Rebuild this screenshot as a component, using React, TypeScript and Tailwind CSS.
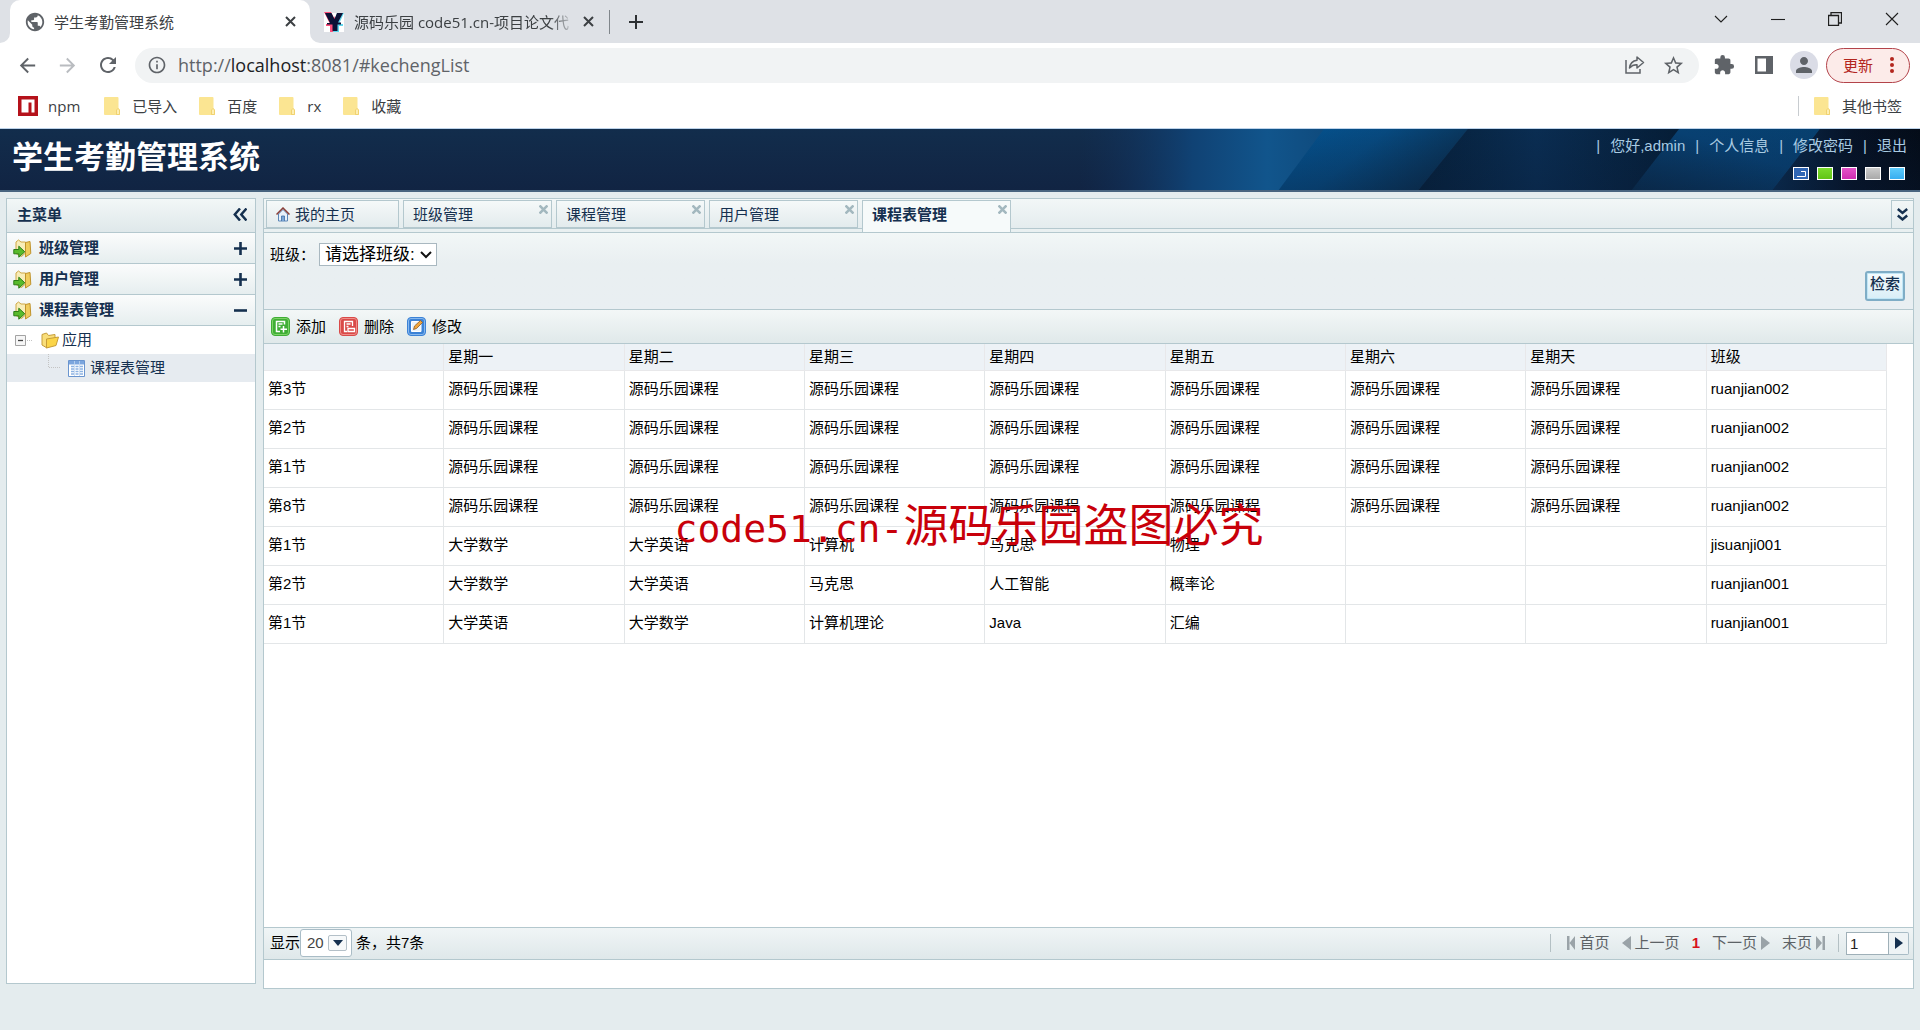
import type { ReactNode } from "react";
import {
  MdArrowBack,
  MdArrowForward,
  MdExtension,
  MdInfoOutline,
  MdPerson,
  MdPublic,
  MdRefresh,
  MdStarBorder,
} from "react-icons/md";

const weekdays = ["", "星期一", "星期二", "星期三", "星期四", "星期五", "星期六", "星期天", "班级"];

const full = Array<string>(7).fill("源码乐园课程");

const lessons: string[][] = [
  ["第3节", ...full, "ruanjian002"],
  ["第2节", ...full, "ruanjian002"],
  ["第1节", ...full, "ruanjian002"],
  ["第8节", ...full, "ruanjian002"],
  ["第1节", "大学数学", "大学英语", "计算机", "马克思", "物理", "", "", "jisuanji001"],
  ["第2节", "大学数学", "大学英语", "马克思", "人工智能", "概率论", "", "", "ruanjian001"],
  ["第1节", "大学英语", "大学数学", "计算机理论", "Java", "汇编", "", "", "ruanjian001"],
];

const pageTabs = ["班级管理", "课程管理", "用户管理", "课程表管理"];

export default function App() {
  return (
    <div className="relative flex min-h-screen flex-col bg-[#e4ecee] font-['Liberation_Sans','Noto_Sans_CJK_SC',sans-serif] text-[15px] leading-5 text-black">
      <BrowserChrome />
      <SiteHeader />
      <div className="flex flex-1 gap-[7px] px-[6px] pt-[6px] pb-[41px]">
        <Sidebar />
        <MainPanel />
      </div>
      <Watermark />
    </div>
  );
}

// 浏览器外壳：标签栏、地址栏、书签栏
function BrowserChrome() {
  return (
    <div className="bg-white font-['Open_Sans','Noto_Sans_CJK_SC',sans-serif] text-[#3c4043]">
      <div className="flex h-[43px] items-stretch bg-[#dee1e6]">
        <div className="relative ml-[10px] flex w-[300px] items-center rounded-t-[10px] bg-white pr-3 pl-[14px]">
          <TabFoot className="absolute bottom-0 -left-[10px]" />
          <TabFoot className="absolute -right-[10px] bottom-0 -scale-x-100" />
          <MdPublic className="mr-2 size-[22px] text-[#5f6368]" />
          <span className="flex-1">学生考勤管理系统</span>
          <button aria-label="关闭标签页" className="flex size-4 items-center justify-center">
            <CloseIcon />
          </button>
        </div>
        <div className="flex w-[299px] items-center pr-[13px] pl-[14px]">
          <FavIconY />
          <span className="mr-1 ml-[10px] flex-1 overflow-hidden whitespace-nowrap [mask-image:linear-gradient(to_right,black_88%,transparent)]">
            源码乐园 code51.cn-项目论文代
          </span>
          <button aria-label="关闭标签页" className="flex size-4 items-center justify-center">
            <CloseIcon />
          </button>
        </div>
        <span className="h-6 w-px self-center bg-[#80868b]" />
        <button aria-label="新标签页" className="ml-[14px] flex w-6 items-center justify-center">
          <svg width="16" height="16" viewBox="0 0 16 16" stroke="#2d3033" strokeWidth="2">
            <path d="M8 1v14M1 8h14" />
          </svg>
        </button>
        <div className="ml-auto flex items-start pt-1 text-[#1f1f1f]">
          <WindowButton label="搜索标签页">
            <path d="M1 4l6 6 6-6" />
          </WindowButton>
          <WindowButton label="最小化">
            <path d="M0 7.5h14" />
          </WindowButton>
          <WindowButton label="还原">
            <path d="M.5 3.500h10v10H.5zM3 3.500V.5h10.500v10.500H11" strokeWidth="1.300" />
          </WindowButton>
          <WindowButton label="关闭">
            <path d="M1 1l12 12M13 1L1 13" />
          </WindowButton>
        </div>
      </div>

      <div className="flex h-11 items-center pr-[10px] pl-4 text-[#5f6368]">
        <button aria-label="后退">
          <MdArrowBack className="size-[23px]" />
        </button>
        <button aria-label="前进" className="ml-[17px] text-[#b9bcc0]">
          <MdArrowForward className="size-[23px]" />
        </button>
        <button aria-label="刷新" className="ml-[17px]">
          <MdRefresh className="size-6" />
        </button>
        <div className="ml-[15px] flex h-[35px] flex-1 items-center rounded-full bg-[#f1f3f4] pr-[14px] pl-3">
          <MdInfoOutline className="size-5" />
          <span className="ml-[11px] flex-1 text-[18px]">
            http://<span className="text-[#202124]">localhost</span>:8081/#kechengList
          </span>
          <button aria-label="分享">
            <svg width="20" height="20" viewBox="0 0 20 20" fill="none" stroke="#5f6368" strokeWidth="1.500">
              <path d="M1 5v13h14v-4" />
              <path d="M12 2l6.500 5.500L12 13v-3.200c-3.500-.2-5.500 1-7.500 3.200.6-4.500 3.500-7.200 7.500-7.700z" strokeLinejoin="round" />
            </svg>
          </button>
          <button aria-label="收藏此页" className="ml-[17px]">
            <MdStarBorder className="size-[23px]" />
          </button>
        </div>
        <button aria-label="扩展程序" className="ml-[14px]">
          <MdExtension className="size-[22px]" />
        </button>
        <button aria-label="侧边栏" className="ml-5">
          <svg width="18" height="18" viewBox="0 0 18 18" fill="#5f6368">
            <path d="M0 0h18v18H0zM2.500 2.500v13H11v-13z" fillRule="evenodd" />
          </svg>
        </button>
        <button aria-label="用户" className="ml-[17px] flex size-7 items-center justify-center rounded-full bg-[#dadce6]">
          <MdPerson className="size-6" />
        </button>
        <button className="ml-2 flex h-[35px] w-[84px] items-center justify-between rounded-full border border-[#b3434a] bg-[#fcebe9] pr-[15px] pl-4 text-[#b3261e]">
          更新
          <svg width="4" height="18" viewBox="0 0 4 18" fill="#b3261e">
            <circle cx="2" cy="3" r="2" />
            <circle cx="2" cy="9" r="2" />
            <circle cx="2" cy="15" r="2" />
          </svg>
        </button>
      </div>

      <div className="flex h-[42px] items-center border-b border-[#bdd3ea] px-[18px] pb-1">
        <a href="#npm" className="mr-6 flex items-center gap-[10px]">
          <svg width="20" height="20" viewBox="0 0 20 20">
            <path d="M0 0h20v20H0z" fill="#b5121b" />
            <path d="M3.500 3.500h13v13h-3V6.500h-3v10h-7z" fill="#fff" />
          </svg>
          npm
        </a>
        {["已导入", "百度", "rx", "收藏"].map((name) => (
          <a key={name} href={`#${name}`} className="mr-[22px] flex items-center gap-3">
            <BookmarkFolder />
            {name}
          </a>
        ))}
        <a href="#other" className="ml-auto flex items-center gap-3">
          <span className="mr-[3px] h-5 w-px bg-[#c8ccd0]" />
          <BookmarkFolder />
          其他书签
        </a>
      </div>
    </div>
  );
}

function TabFoot({ className }: { className: string }) {
  return (
    <svg className={className} width="10" height="10" viewBox="0 0 10 10">
      <path d="M10 0v10H0A10 10 0 0 0 10 0z" fill="#fff" />
    </svg>
  );
}

function CloseIcon() {
  return (
    <svg width="11" height="11" viewBox="0 0 11 11" stroke="#3c4043" strokeWidth="2">
      <path d="M1 1l9 9M10 1l-9 9" />
    </svg>
  );
}

function FavIconY() {
  return (
    <svg width="20" height="20" viewBox="0 0 20 20">
      <path d="M0 1h20v19H0z" fill="#fff" />
      <path d="M0 0h7l3 6 1-2v16H6v-6H2v-2h4z" fill="#ff4f7b" />
      <path d="M13 1h7l-5 11h4v2h-4v6H9z" fill="#5fd8ee" />
      <path d="M1 1h6.500l3 6 2.500-6h6l-5 9.500h3v2h-3.500V19h-5v-6.500H3v-1.500h3z" fill="#0c1236" />
    </svg>
  );
}

function WindowButton({ label, children }: { label: string; children: ReactNode }) {
  return (
    <button aria-label={label} className="flex h-[30px] w-[57px] items-center justify-center">
      <svg width="14" height="14" viewBox="0 0 14 14" fill="none" stroke="currentColor" strokeWidth="1.100">
        {children}
      </svg>
    </button>
  );
}

function BookmarkFolder() {
  return (
    <svg width="16" height="18" viewBox="0 0 16 18">
      <path d="M1 0h12.500a1 1 0 0 1 1 1v10l1.500 2v4a1 1 0 0 1-1 1H1a1 1 0 0 1-1-1V1a1 1 0 0 1 1-1z" fill="#fbe592" />
      <path d="M12.500 17.500v-4.500l1.500-1.500 1.500 1.500v4.500z" fill="#fdeeb4" stroke="#ecc95a" strokeWidth=".7" />
    </svg>
  );
}

// 系统顶部横幅
function SiteHeader() {
  return (
    <header className="relative flex h-[63px] justify-between overflow-hidden border-b-2 border-[#48647f] bg-gradient-to-b from-[#122d4c] to-[#112443]">
      <svg className="absolute top-0 right-0" width="840" height="62" viewBox="1080 0 840 62">
        <defs>
          <linearGradient id="glow" x1="0" x2="1">
            <stop offset="0" stopColor="#12305a" stopOpacity="0" />
            <stop offset=".45" stopColor="#104274" />
            <stop offset=".75" stopColor="#11558c" />
            <stop offset="1" stopColor="#0f4a7c" />
          </linearGradient>
          <linearGradient id="band" x1="0" x2="1" y1="0" y2=".4">
            <stop offset="0" stopColor="#045390" />
            <stop offset=".5" stopColor="#074a80" />
            <stop offset="1" stopColor="#0a3052" />
          </linearGradient>
          <linearGradient id="deep" x1="0" x2="1">
            <stop offset="0" stopColor="#06203a" />
            <stop offset=".45" stopColor="#0a2d52" />
            <stop offset="1" stopColor="#051d36" />
          </linearGradient>
          <linearGradient id="band2" x1="0" x2="1" y1="1" y2="0">
            <stop offset="0" stopColor="#0a2d4f" />
            <stop offset=".6" stopColor="#084173" />
            <stop offset="1" stopColor="#07406f" />
          </linearGradient>
          <linearGradient id="edge" x1="0" x2="1">
            <stop offset="0" stopColor="#0a2c50" />
            <stop offset=".55" stopColor="#061225" />
            <stop offset="1" stopColor="#040c18" />
          </linearGradient>
          <linearGradient id="shade" x1="0" x2="0" y1="0" y2="1">
            <stop offset="0" stopColor="#0a1c38" stopOpacity="0" />
            <stop offset="1" stopColor="#0a1c38" stopOpacity=".3" />
          </linearGradient>
        </defs>
        <path d="M1080 0h250v62h-250z" fill="url(#glow)" />
        <path d="M1324 0h144l-50 62h-140z" fill="url(#band)" />
        <path d="M1468 0h212l-48 62h-214z" fill="url(#deep)" />
        <path d="M1679 0h141l-48 62h-141z" fill="url(#band2)" />
        <path d="M1820 0h100v62h-148z" fill="url(#edge)" />
        <path d="M1324 0h596v62h-642z" fill="url(#shade)" />
      </svg>
      <h1 className="relative ml-3 text-[31px] leading-[58px] font-bold text-white">学生考勤管理系统</h1>
      <div className="relative flex flex-col items-end pt-[7px] pr-[13px] text-[#a9cbe2]">
        <nav className="flex">
          <span className="px-[10px]">|</span>
          <span>您好,admin</span>
          <span className="px-[10px]">|</span>
          <a href="#info">个人信息</a>
          <span className="px-[10px]">|</span>
          <a href="#password">修改密码</a>
          <span className="px-[10px]">|</span>
          <a href="#logout">退出</a>
        </nav>
        <div className="mt-[11px] mr-[2px] flex gap-2">
          <button aria-label="深蓝" className="flex h-[13px] w-4 items-center justify-center border border-white bg-[#2f66b4]">
            <svg width="9" height="6" viewBox="0 0 9 6" fill="none" stroke="#fff">
              <path d="M0 5.500h8.500V.5H4" />
            </svg>
          </button>
          <button aria-label="绿色" className="h-[13px] w-4 border border-white bg-gradient-to-b from-[#7bdc2c] to-[#62c416]" />
          <button aria-label="紫色" className="h-[13px] w-4 border border-white bg-gradient-to-b from-[#e452c8] to-[#cf2db1]" />
          <button aria-label="灰色" className="h-[13px] w-4 border border-white bg-gradient-to-b from-[#cbcbcb] to-[#a9a9a9]" />
          <button aria-label="天蓝" className="h-[13px] w-4 border border-white bg-gradient-to-b from-[#5ccbfb] to-[#38aef0]" />
        </div>
      </div>
    </header>
  );
}

// 左侧主菜单
function Sidebar() {
  return (
    <aside className="mb-[5px] w-[250px] shrink-0 border border-[#b4c8ce] bg-white text-[#15304f]">
      <div className="flex h-[34px] items-center justify-between border-b border-[#b4c8ce] bg-gradient-to-b from-[#f2f7f7] to-[#dfe8ea] pr-2 pb-[2px] pl-[10px] font-bold">
        主菜单
        <button aria-label="收起菜单">
          <svg width="14" height="13" viewBox="0 0 14 13" fill="none" stroke="#15304f" strokeWidth="2.500">
            <path d="M7 .5L1.800 6.500 7 12.500M13.500.5L8.300 6.500l5.200 6" />
          </svg>
        </button>
      </div>
      <MenuHeader title="班级管理" />
      <MenuHeader title="用户管理" />
      <MenuHeader title="课程表管理" open />
      <ul>
        <li>
          <div className="flex h-7 items-center pl-2">
            <svg width="26" height="11" viewBox="0 0 26 11" fill="none">
              <path d="M.5.5h10v10H.5z" stroke="#a3a3a3" fill="#f6f6f6" />
              <path d="M3 5.500h5" stroke="#444" strokeWidth="1.300" />
              <path d="M12 5.500h6" stroke="#c4c4c4" strokeDasharray="1 1" />
            </svg>
            <FolderIcon />
            <span className="ml-[3px]">应用</span>
          </div>
          <ul>
            <li className="flex h-7 items-center bg-[#e6ebf0] pl-10">
              <svg width="21" height="28" viewBox="0 0 21 28" fill="none" stroke="#c4c4c4" strokeDasharray="1 1">
                <path d="M1.500 0v13.500H13" />
              </svg>
              <SheetIcon />
              <a href="#kechengList" className="ml-[5px]">
                课程表管理
              </a>
            </li>
          </ul>
        </li>
      </ul>
    </aside>
  );
}

function MenuHeader({ title, open = false }: { title: string; open?: boolean }) {
  return (
    <button
      aria-expanded={open}
      className="flex h-[31px] w-full items-center border-b border-[#b4c8ce] bg-gradient-to-b from-[#fbfcfc] to-[#e6eeef] pr-2 pl-[6px] font-bold"
    >
      <FolderArrowIcon />
      <span className="ml-[7px] flex-1 text-left">{title}</span>
      <svg width="13" height="13" viewBox="0 0 13 13" stroke="#15304f" strokeWidth="2.600">
        <path d={open ? "M0 6.500h13" : "M0 6.500h13M6.500 0v13"} />
      </svg>
    </button>
  );
}

function FolderArrowIcon() {
  return (
    <svg width="19" height="19" viewBox="0 0 19 19">
      <path d="M3 3l2.500-2L8 3h4.500v11l-4 3.500-5.500-3z" fill="#f8edb8" stroke="#cfa845" />
      <path d="M12.500 3.500L17 2.500l.8 12-5.300 3.500z" fill="#f0cc5c" stroke="#c0932c" />
      <path d="M.8 10.500h5V7.200l6 5.600-6 5.400v-3.400h-5z" fill="#59bb2c" stroke="#2c7d15" />
    </svg>
  );
}

function FolderIcon() {
  return (
    <svg width="18" height="17" viewBox="0 0 18 17">
      <path d="M1 2.500L5.500 1l2 2.500 6.500-1V8l-8 8L1 13z" fill="#f9de7a" stroke="#c69d38" />
      <path d="M5.500 7l12-2-2.500 8.500L5.500 16z" fill="#fbd548" stroke="#c69d38" />
    </svg>
  );
}

function SheetIcon() {
  return (
    <svg width="17" height="17" viewBox="0 0 17 17">
      <path d="M.5.5h16v16H.5z" fill="#fff" stroke="#6a95cf" />
      <path d="M1 1h15v3.500H1z" fill="#7ca6de" />
      <path d="M3 6.500h3M7.500 6.500h3M12 6.500h3M3 9h3M7.500 9h3M12 9h3M3 11.500h3M7.500 11.500h3M12 11.500h3M3 14h3M7.500 14h3M12 14h3" stroke="#8db3e2" strokeWidth="1.300" />
      <path d="M6.500 1v15M11.500 1v15" stroke="#c2d7f0" strokeWidth=".8" />
    </svg>
  );
}

// 右侧内容区
function MainPanel() {
  return (
    <main className="flex min-w-0 flex-1 flex-col border border-[#b4c8ce] bg-white">
      <PageTabs />
      <SearchBar />
      <div className="flex h-[34px] items-center gap-[13px] border-b border-[#b4c8ce] bg-gradient-to-b from-[#f3f7f7] to-[#e0e9ea] px-[7px]">
        <ToolButton title="添加" color="#3fae35" rim="#7ed267">
          <path d="M13.500 7.500V4.500h-8v10H9M7.500 7h4M7.500 9.500h2M12.500 9v6.500M9.500 12.200h6.500" strokeWidth="1.500" />
        </ToolButton>
        <ToolButton title="删除" color="#d94a48" rim="#ef8f8a">
          <path d="M13.500 9V4.500h-8v10H8M7.500 7h4M7.500 9.500h2M9 11.500h6.500v3H9z" strokeWidth="1.300" />
        </ToolButton>
        <ToolButton title="修改" color="#3b82d6" rim="#86b8ee">
          <path d="M4.500 4.500h9.500v10H4.500z" fill="#eaf3fc" />
          <path d="M6.500 12.500l1-3.500 6-5.500 2 2-6 6z" fill="#f0a53c" stroke="#8c5a24" strokeWidth=".8" />
        </ToolButton>
      </div>
      <LessonTable />
      <Pager />
    </main>
  );
}

function PageTabs() {
  return (
    <div className="flex h-[34px] flex-col border-b border-[#b4c8ce] bg-[#e9f0f1] text-[#15304f]">
      <div className="flex h-[30px] items-start border-b border-[#b4c8ce] bg-gradient-to-b from-[#f2f7f7] to-[#e4ecee] pt-px pl-[2px]">
        <button className="mr-1 flex h-7 w-[133px] items-center border border-[#b4c8ce] bg-gradient-to-b from-[#f5f9f9] to-[#e3ebed] pt-px pl-[9px]">
          <svg width="14" height="15" viewBox="0 0 14 15">
            <path d="M2.500 7v7h9V7L7 2.500z" fill="#e8f1fa" stroke="#5b86b8" />
            <path d="M5.500 14V9h3v5" fill="#7ba6d6" stroke="#3f6da3" strokeWidth=".8" />
            <path d="M.5 7.500L7 1l6.500 6.500" fill="none" stroke="#8a3f38" strokeWidth="1.500" />
          </svg>
          <span className="ml-[5px]">我的主页</span>
        </button>
        {pageTabs.map((name) => {
          const active = name === "课程表管理";
          return (
            <div
              key={name}
              className={
                active
                  ? "relative mr-1 flex h-8 w-[149px] items-start border border-b-0 border-[#b4c8ce] bg-[#f6fafa] font-bold"
                  : "mr-1 flex h-7 w-[149px] items-start border border-[#b4c8ce] bg-gradient-to-b from-[#f5f9f9] to-[#e3ebed]"
              }
            >
              <button className="flex-1 pt-1 pl-[9px] text-left">{name}</button>
              <button aria-label={`关闭${name}`} className="px-[3px] py-1">
                <svg width="9" height="9" viewBox="0 0 9 9" stroke="#a3b8bf" strokeWidth="2.600">
                  <path d="M.5.5l8 8M8.500.5l-8 8" />
                </svg>
              </button>
            </div>
          );
        })}
        <button aria-label="更多标签" className="ml-auto flex h-7 w-[22px] items-center justify-center border border-r-0 border-b-0 border-[#b4c8ce]">
          <svg width="11" height="13" viewBox="0 0 11 13" fill="none" stroke="#15304f" strokeWidth="2.400">
            <path d="M.8 1l4.700 4 4.700-4M.8 7.500l4.700 4 4.700-4" />
          </svg>
        </button>
      </div>
    </div>
  );
}

function SearchBar() {
  return (
    <form className="flex h-[77px] items-start justify-between border-b border-[#b4c8ce] bg-gradient-to-b from-[#f2f7f7] via-[#e9eff1] via-40% to-[#e9eff2] pr-2 pl-[6px] shadow-[0_1px_0_#fff,0_2px_0_#b4c8ce]">
      <div className="flex items-center pt-[10px]">
        <label htmlFor="banji" className="w-[49px] whitespace-nowrap">
          班级：
        </label>
        <div className="relative">
          <select
            id="banji"
            className="h-[23px] w-[118px] appearance-none border border-[#a9b8c0] bg-white pl-[5px] text-[17px] leading-5 text-black"
          >
            <option>请选择班级:</option>
          </select>
          <svg className="pointer-events-none absolute top-2 right-[5px]" width="12" height="8" viewBox="0 0 12 8" fill="none" stroke="#111" strokeWidth="2">
            <path d="M1 1l5 5 5-5" />
          </svg>
        </div>
      </div>
      <button
        type="button"
        className="mt-[38px] h-[30px] w-10 rounded-[3px] border-2 border-[#7fadc6] bg-gradient-to-b from-[#f4fbfd] to-[#d9eef7] pb-1 leading-5 font-medium whitespace-nowrap text-[#15304f] shadow-[inset_0_0_0_1px_#c0e6f6]"
      >
        检索
      </button>
    </form>
  );
}

function ToolButton({ title, color, rim, children }: { title: string; color: string; rim: string; children: ReactNode }) {
  return (
    <button className="flex items-center gap-[6px]">
      <svg width="19" height="19" viewBox="0 0 19 19" fill="none" stroke="#fff">
        <rect x=".5" y=".5" width="18" height="18" rx="3.500" fill={color} stroke={color} />
        <rect x="1.500" y="1.500" width="16" height="16" rx="2.500" stroke={rim} />
        {children}
      </svg>
      {title}
    </button>
  );
}

function LessonTable() {
  return (
    <div className="flex-1 pr-[26px]">
      <table className="w-full table-fixed border-separate border-spacing-0">
        <thead>
          <tr className="h-[27px] bg-[#edf2f6]">
            {weekdays.map((day, i) => (
              <th key={i} className="border-r border-b border-[#e8e8ea] p-0 pl-1 text-left font-normal">
                {day}
              </th>
            ))}
          </tr>
        </thead>
        <tbody>
          {lessons.map((row, i) => (
            <tr key={i} className="h-[39px]">
              {row.map((cell, j) => (
                <td key={j} className="border-r border-b border-[#e3e6e8] p-0 pb-[2px] pl-1">
                  {cell}
                </td>
              ))}
            </tr>
          ))}
        </tbody>
      </table>
    </div>
  );
}

// 分页栏
function Pager() {
  return (
    <div className="mb-7 flex h-[33px] items-center border-y border-[#b4c8ce] bg-gradient-to-b from-[#f0f5f6] to-[#dfe8ea] pr-1 pb-px pl-[6px]">
      <label htmlFor="pageSize">显示</label>
      <div className="relative mr-1">
        <select
          id="pageSize"
          className="h-7 w-[52px] appearance-none rounded-[3px] border border-[#a9bcc6] bg-white pl-[6px] text-[#444]"
        >
          <option>20</option>
        </select>
        <span className="pointer-events-none absolute top-[6px] right-[5px] flex h-4 w-[19px] items-center justify-center rounded-[2px] border border-[#b4c0c8] bg-[#f7f9fa]">
          <svg width="10" height="6" viewBox="0 0 10 6" fill="#15304f">
            <path d="M0 0h10L5 6z" />
          </svg>
        </span>
      </div>
      <span>条，共7条</span>
      <div className="ml-auto flex items-center text-[#5c6266]">
        <span className="mr-4 h-[18px] w-px bg-[#b4c0c4]" />
        <button className="mr-3 flex items-center gap-[5px]">
          <svg width="8" height="14" viewBox="0 0 8 14" fill="#9aa3a8">
            <path d="M0 0h2.500v14H0zM8 0v14L2.500 7z" />
          </svg>
          首页
        </button>
        <button className="mr-3 flex items-center gap-1">
          <svg width="9" height="14" viewBox="0 0 9 14" fill="#9aa3a8">
            <path d="M9 0v14L0 7z" />
          </svg>
          上一页
        </button>
        <span className="mr-3 font-bold text-[#d8121b]">1</span>
        <button className="mr-3 flex items-center gap-1">
          下一页
          <svg width="9" height="14" viewBox="0 0 9 14" fill="#9aa3a8">
            <path d="M0 0v14l9-7z" />
          </svg>
        </button>
        <button className="flex items-center gap-1">
          末页
          <svg width="9" height="14" viewBox="0 0 9 14" fill="#9aa3a8">
            <path d="M0 0v14l6-7zM6.500 0H9v14H6.500z" />
          </svg>
        </button>
        <span className="mr-[7px] ml-[13px] h-[18px] w-px bg-[#b4c0c4]" />
        <input aria-label="页码" defaultValue="1" className="h-[23px] w-[43px] border border-[#9fb0b8] bg-white pl-[3px] text-[#222]" />
        <button aria-label="跳转" className="flex h-[23px] w-5 items-center justify-center rounded-r-[2px] border border-l-0 border-[#a9bcc6] bg-[#eef3f5]">
          <svg width="8" height="12" viewBox="0 0 8 12" fill="#15304f">
            <path d="M0 0v12l8-6z" />
          </svg>
        </button>
      </div>
    </div>
  );
}

function Watermark() {
  return (
    <div className="pointer-events-none absolute inset-x-0 top-[493px] flex items-baseline justify-center pl-[18px] leading-[60px] whitespace-nowrap text-[#c8000a]">
      <span className="font-['DejaVu_Sans_Mono',monospace] text-[38px]">code51.cn-</span>
      <span className="font-['Noto_Sans_CJK_SC',sans-serif] text-[45px]">源码乐园盗图必究</span>
    </div>
  );
}
